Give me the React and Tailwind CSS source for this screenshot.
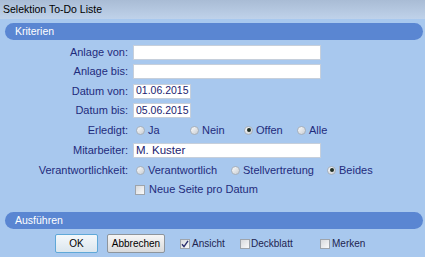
import React from 'react'

const Radio = ({ checked = false }) => (
  <span className="w-[9px] h-[9px] rounded-full border border-[#a7b0ba] bg-gradient-to-br from-[#fbfbfb] to-[#c9ced4] flex items-center justify-center shrink-0">
    {checked && <span className="w-[4px] h-[4px] rounded-full bg-[#1e2e24]" />}
  </span>
)

const Check = ({ checked = false }) => (
  <span className="w-[10px] h-[10px] border border-[#9ea4ab] bg-gradient-to-br from-[#d8dadd] to-[#fafafa] flex items-center justify-center shrink-0">
    {checked && (
      <svg width="8" height="8" viewBox="0 0 8 8">
        <path d="M1 4.2 L3 6.6 L7 0.8" fill="none" stroke="#2a2f6e" strokeWidth="1.4" />
      </svg>
    )}
  </span>
)

const Option = ({ checked, label, className = '' }) => (
  <div className={'flex items-center gap-[3px] ' + className}>
    <Radio checked={checked} />
    <span>{label}</span>
  </div>
)

const Field = ({ value = '', className = 'w-[188px] text-[11.5px]' }) => (
  <div className={'h-[15px] bg-white border border-[#c6cfdb] flex items-center pl-[2px] overflow-hidden whitespace-nowrap text-[#1b2270] ' + className}>
    {value}
  </div>
)

const Row = ({ label, h, children }) => (
  <div className={'flex items-center ' + h}>
    <div className="w-[129px] text-right pr-[1px]">{label}</div>
    <div className="flex items-center pl-[4px]">{children}</div>
  </div>
)

const SectionBar = ({ title }) => (
  <div className="ml-[5px] mr-[2px] h-[17px] rounded-full bg-[#5a86d2] flex items-center pl-[10px] text-white text-[10.5px]">
    {title}
  </div>
)

export default function App() {
  return (
    <div
      className="w-[425px] h-[257px] bg-[#a8c8ee] flex flex-col overflow-hidden text-[11px] text-[#1f2b7c]"
      style={{ fontFamily: '"Liberation Sans", Arial, sans-serif' }}
    >
      <div className="h-[19px] bg-gradient-to-b from-[#a9bcd5] to-[#bfd2ea] flex items-center pl-[3px] text-black text-[10.5px]">
        Selektion To-Do Liste
      </div>

      <div className="mt-[4px]">
        <SectionBar title="Kriterien" />
      </div>

      <div className="mt-[3px] flex flex-col">
        <Row label="Anlage von:" h="h-[19px]">
          <Field />
        </Row>
        <Row label="Anlage bis:" h="h-[19px]">
          <Field />
        </Row>
        <Row label="Datum von:" h="h-[20px]">
          <Field value="01.06.2015" className="w-[58px] text-[10.5px]" />
        </Row>
        <Row label="Datum bis:" h="h-[19px]">
          <Field value="05.06.2015" className="w-[58px] text-[10.5px]" />
        </Row>
        <Row label="Erledigt:" h="h-[20px]">
          <div className="flex items-center pl-[3px]">
            <Option label="Ja" className="w-[54px]" />
            <Option label="Nein" className="w-[54px]" />
            <Option label="Offen" checked className="w-[53px]" />
            <Option label="Alle" />
          </div>
        </Row>
        <Row label="Mitarbeiter:" h="h-[21px]">
          <Field value="M. Kuster" />
        </Row>
        <Row label="Verantwortlichkeit:" h="h-[18px]">
          <div className="flex items-center pl-[3px]">
            <Option label="Verantwortlich" className="w-[95px]" />
            <Option label="Stellvertretung" className="w-[96px]" />
            <Option label="Beides" checked />
          </div>
        </Row>
        <Row label="" h="h-[21px]">
          <div className="flex items-center gap-[4px] pl-[2px]">
            <Check />
            <span>Neue Seite pro Datum</span>
          </div>
        </Row>
      </div>

      <div className="mt-[12px]">
        <SectionBar title="Ausführen" />
      </div>

      <div className="mt-[5px] flex items-center pl-[55px] text-[10px] text-[#1d2450]">
        <button className="w-[43px] h-[19px] rounded-[2px] border border-[#5fa8d8] bg-gradient-to-b from-[#f4f8fb] to-[#dbe6ee] text-[10px] text-black">
          OK
        </button>
        <button className="ml-[9px] w-[58px] h-[19px] rounded-[2px] border border-[#8e959c] bg-gradient-to-b from-[#f6f6f6] to-[#d9dadb] text-[10px] text-black">
          Abbrechen
        </button>
        <div className="ml-[15px] flex items-center gap-[2px] w-[60px]">
          <Check checked />
          <span>Ansicht</span>
        </div>
        <div className="flex items-center gap-[1px] w-[80px]">
          <Check />
          <span>Deckblatt</span>
        </div>
        <div className="flex items-center gap-[2px]">
          <Check />
          <span>Merken</span>
        </div>
      </div>
    </div>
  )
}
